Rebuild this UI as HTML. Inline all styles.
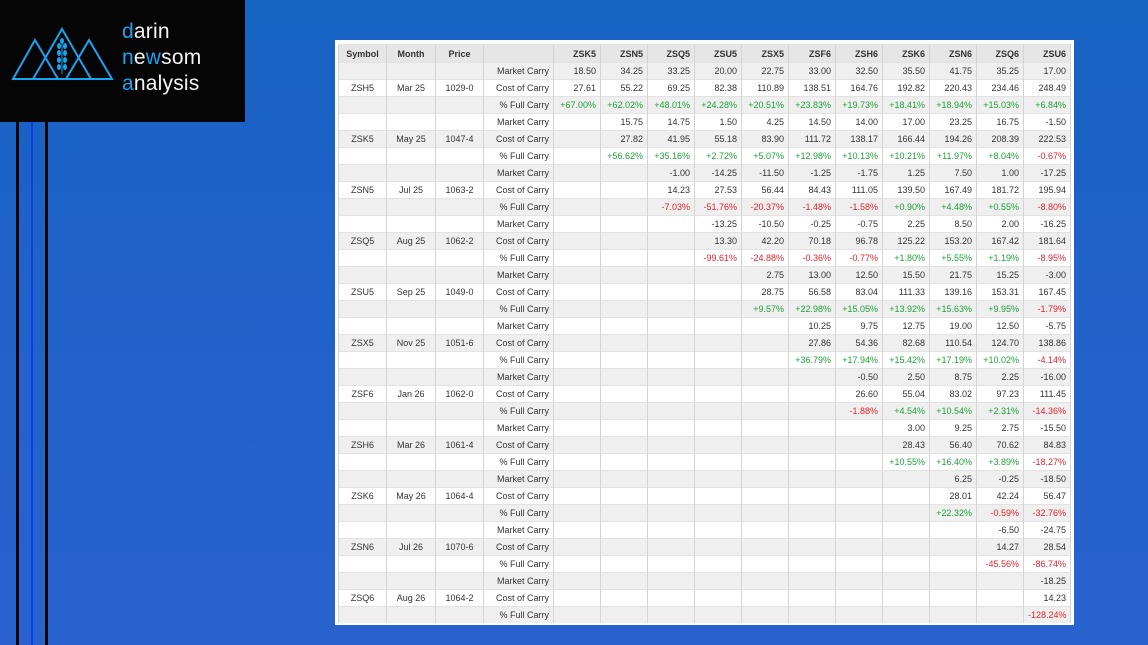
<!DOCTYPE html>
<html><head><meta charset="utf-8"><style>
html,body{margin:0;padding:0;width:1148px;height:645px;overflow:hidden}
body{background:linear-gradient(180deg,#1663c2 0%,#1f62c8 40%,#2962cf 100%);position:relative;font-family:"Liberation Sans",sans-serif}
.logo{position:absolute;left:0;top:0;width:245px;height:122px;background:#050505}
.logo .t{position:absolute;left:122px;top:19px;color:#f4f4f4;font-size:21px;line-height:26px;letter-spacing:0.2px}
.logo .t b{color:#1aa3f0;font-weight:normal}
.vl{position:absolute;top:122px;height:523px;width:3px;background:#050505}
.panel{position:absolute;left:335px;top:40px;width:739px;height:585px;background:#fff}
table{position:absolute;left:3px;top:4px;border-collapse:collapse;table-layout:fixed;width:733px;height:579px;font-size:9px;color:#333}
td,th{border-left:1px solid #d4d4d4;border-right:1px solid #d4d4d4;border-top:1px solid #e2e2e2;padding:0 4px;text-align:right;white-space:nowrap;overflow:hidden}
th{height:17px;background:#e6e6e6;font-weight:bold;text-align:right}
th.c,td.c{text-align:center}
tr:nth-child(even) td{background:#efefef}
.g{color:#1fa23a}.r{color:#e3242b}
</style></head><body>
<div class="logo">
<svg width="120" height="90" style="position:absolute;left:8px;top:22px" viewBox="0 0 120 90">
<g fill="none" stroke="#1aa3f0" stroke-width="2">
<polygon points="5,57 27,18 50,57"/><polygon points="25,57 54,7 83,57"/><polygon points="58,57 81,18 104,57"/>
</g>
<g fill="#1aa3f0"><line x1="54" y1="22" x2="54" y2="52" stroke="#1aa3f0" stroke-width="1"/>
<ellipse cx="51" cy="24" rx="2" ry="3"/><ellipse cx="57" cy="24" rx="2" ry="3"/><ellipse cx="51" cy="31" rx="2" ry="3"/><ellipse cx="57" cy="31" rx="2" ry="3"/><ellipse cx="51" cy="38" rx="2" ry="3"/><ellipse cx="57" cy="38" rx="2" ry="3"/><ellipse cx="51" cy="45" rx="2" ry="3"/><ellipse cx="57" cy="45" rx="2" ry="3"/><ellipse cx="54" cy="19" rx="2" ry="3"/></g>
</svg>
<div class="t"><b>d</b>arin<br><b>n</b>e<b>w</b>som<br><b>a</b>nalysis</div>
</div>
<div class="vl" style="left:16px"></div>
<div class="vl" style="left:31px;width:2px;background:#0a3cf0"></div>
<div class="vl" style="left:45px"></div>
<div class="panel"><table>
<colgroup><col style="width:48px"><col style="width:49px"><col style="width:48px"><col style="width:70px"><col span="11"></colgroup>
<tr><th class="c">Symbol</th><th class="c">Month</th><th class="c">Price</th><th></th><th>ZSK5</th><th>ZSN5</th><th>ZSQ5</th><th>ZSU5</th><th>ZSX5</th><th>ZSF6</th><th>ZSH6</th><th>ZSK6</th><th>ZSN6</th><th>ZSQ6</th><th>ZSU6</th></tr>
<tr><td></td><td></td><td></td><td>Market Carry</td><td>18.50</td><td>34.25</td><td>33.25</td><td>20.00</td><td>22.75</td><td>33.00</td><td>32.50</td><td>35.50</td><td>41.75</td><td>35.25</td><td>17.00</td></tr>
<tr><td class="c">ZSH5</td><td class="c">Mar 25</td><td class="c">1029-0</td><td>Cost of Carry</td><td>27.61</td><td>55.22</td><td>69.25</td><td>82.38</td><td>110.89</td><td>138.51</td><td>164.76</td><td>192.82</td><td>220.43</td><td>234.46</td><td>248.49</td></tr>
<tr><td></td><td></td><td></td><td>% Full Carry</td><td class="g">+67.00%</td><td class="g">+62.02%</td><td class="g">+48.01%</td><td class="g">+24.28%</td><td class="g">+20.51%</td><td class="g">+23.83%</td><td class="g">+19.73%</td><td class="g">+18.41%</td><td class="g">+18.94%</td><td class="g">+15.03%</td><td class="g">+6.84%</td></tr>
<tr><td></td><td></td><td></td><td>Market Carry</td><td></td><td>15.75</td><td>14.75</td><td>1.50</td><td>4.25</td><td>14.50</td><td>14.00</td><td>17.00</td><td>23.25</td><td>16.75</td><td>-1.50</td></tr>
<tr><td class="c">ZSK5</td><td class="c">May 25</td><td class="c">1047-4</td><td>Cost of Carry</td><td></td><td>27.82</td><td>41.95</td><td>55.18</td><td>83.90</td><td>111.72</td><td>138.17</td><td>166.44</td><td>194.26</td><td>208.39</td><td>222.53</td></tr>
<tr><td></td><td></td><td></td><td>% Full Carry</td><td></td><td class="g">+56.62%</td><td class="g">+35.16%</td><td class="g">+2.72%</td><td class="g">+5.07%</td><td class="g">+12.98%</td><td class="g">+10.13%</td><td class="g">+10.21%</td><td class="g">+11.97%</td><td class="g">+8.04%</td><td class="r">-0.67%</td></tr>
<tr><td></td><td></td><td></td><td>Market Carry</td><td></td><td></td><td>-1.00</td><td>-14.25</td><td>-11.50</td><td>-1.25</td><td>-1.75</td><td>1.25</td><td>7.50</td><td>1.00</td><td>-17.25</td></tr>
<tr><td class="c">ZSN5</td><td class="c">Jul 25</td><td class="c">1063-2</td><td>Cost of Carry</td><td></td><td></td><td>14.23</td><td>27.53</td><td>56.44</td><td>84.43</td><td>111.05</td><td>139.50</td><td>167.49</td><td>181.72</td><td>195.94</td></tr>
<tr><td></td><td></td><td></td><td>% Full Carry</td><td></td><td></td><td class="r">-7.03%</td><td class="r">-51.76%</td><td class="r">-20.37%</td><td class="r">-1.48%</td><td class="r">-1.58%</td><td class="g">+0.90%</td><td class="g">+4.48%</td><td class="g">+0.55%</td><td class="r">-8.80%</td></tr>
<tr><td></td><td></td><td></td><td>Market Carry</td><td></td><td></td><td></td><td>-13.25</td><td>-10.50</td><td>-0.25</td><td>-0.75</td><td>2.25</td><td>8.50</td><td>2.00</td><td>-16.25</td></tr>
<tr><td class="c">ZSQ5</td><td class="c">Aug 25</td><td class="c">1062-2</td><td>Cost of Carry</td><td></td><td></td><td></td><td>13.30</td><td>42.20</td><td>70.18</td><td>96.78</td><td>125.22</td><td>153.20</td><td>167.42</td><td>181.64</td></tr>
<tr><td></td><td></td><td></td><td>% Full Carry</td><td></td><td></td><td></td><td class="r">-99.61%</td><td class="r">-24.88%</td><td class="r">-0.36%</td><td class="r">-0.77%</td><td class="g">+1.80%</td><td class="g">+5.55%</td><td class="g">+1.19%</td><td class="r">-8.95%</td></tr>
<tr><td></td><td></td><td></td><td>Market Carry</td><td></td><td></td><td></td><td></td><td>2.75</td><td>13.00</td><td>12.50</td><td>15.50</td><td>21.75</td><td>15.25</td><td>-3.00</td></tr>
<tr><td class="c">ZSU5</td><td class="c">Sep 25</td><td class="c">1049-0</td><td>Cost of Carry</td><td></td><td></td><td></td><td></td><td>28.75</td><td>56.58</td><td>83.04</td><td>111.33</td><td>139.16</td><td>153.31</td><td>167.45</td></tr>
<tr><td></td><td></td><td></td><td>% Full Carry</td><td></td><td></td><td></td><td></td><td class="g">+9.57%</td><td class="g">+22.98%</td><td class="g">+15.05%</td><td class="g">+13.92%</td><td class="g">+15.63%</td><td class="g">+9.95%</td><td class="r">-1.79%</td></tr>
<tr><td></td><td></td><td></td><td>Market Carry</td><td></td><td></td><td></td><td></td><td></td><td>10.25</td><td>9.75</td><td>12.75</td><td>19.00</td><td>12.50</td><td>-5.75</td></tr>
<tr><td class="c">ZSX5</td><td class="c">Nov 25</td><td class="c">1051-6</td><td>Cost of Carry</td><td></td><td></td><td></td><td></td><td></td><td>27.86</td><td>54.36</td><td>82.68</td><td>110.54</td><td>124.70</td><td>138.86</td></tr>
<tr><td></td><td></td><td></td><td>% Full Carry</td><td></td><td></td><td></td><td></td><td></td><td class="g">+36.79%</td><td class="g">+17.94%</td><td class="g">+15.42%</td><td class="g">+17.19%</td><td class="g">+10.02%</td><td class="r">-4.14%</td></tr>
<tr><td></td><td></td><td></td><td>Market Carry</td><td></td><td></td><td></td><td></td><td></td><td></td><td>-0.50</td><td>2.50</td><td>8.75</td><td>2.25</td><td>-16.00</td></tr>
<tr><td class="c">ZSF6</td><td class="c">Jan 26</td><td class="c">1062-0</td><td>Cost of Carry</td><td></td><td></td><td></td><td></td><td></td><td></td><td>26.60</td><td>55.04</td><td>83.02</td><td>97.23</td><td>111.45</td></tr>
<tr><td></td><td></td><td></td><td>% Full Carry</td><td></td><td></td><td></td><td></td><td></td><td></td><td class="r">-1.88%</td><td class="g">+4.54%</td><td class="g">+10.54%</td><td class="g">+2.31%</td><td class="r">-14.36%</td></tr>
<tr><td></td><td></td><td></td><td>Market Carry</td><td></td><td></td><td></td><td></td><td></td><td></td><td></td><td>3.00</td><td>9.25</td><td>2.75</td><td>-15.50</td></tr>
<tr><td class="c">ZSH6</td><td class="c">Mar 26</td><td class="c">1061-4</td><td>Cost of Carry</td><td></td><td></td><td></td><td></td><td></td><td></td><td></td><td>28.43</td><td>56.40</td><td>70.62</td><td>84.83</td></tr>
<tr><td></td><td></td><td></td><td>% Full Carry</td><td></td><td></td><td></td><td></td><td></td><td></td><td></td><td class="g">+10.55%</td><td class="g">+16.40%</td><td class="g">+3.89%</td><td class="r">-18.27%</td></tr>
<tr><td></td><td></td><td></td><td>Market Carry</td><td></td><td></td><td></td><td></td><td></td><td></td><td></td><td></td><td>6.25</td><td>-0.25</td><td>-18.50</td></tr>
<tr><td class="c">ZSK6</td><td class="c">May 26</td><td class="c">1064-4</td><td>Cost of Carry</td><td></td><td></td><td></td><td></td><td></td><td></td><td></td><td></td><td>28.01</td><td>42.24</td><td>56.47</td></tr>
<tr><td></td><td></td><td></td><td>% Full Carry</td><td></td><td></td><td></td><td></td><td></td><td></td><td></td><td></td><td class="g">+22.32%</td><td class="r">-0.59%</td><td class="r">-32.76%</td></tr>
<tr><td></td><td></td><td></td><td>Market Carry</td><td></td><td></td><td></td><td></td><td></td><td></td><td></td><td></td><td></td><td>-6.50</td><td>-24.75</td></tr>
<tr><td class="c">ZSN6</td><td class="c">Jul 26</td><td class="c">1070-6</td><td>Cost of Carry</td><td></td><td></td><td></td><td></td><td></td><td></td><td></td><td></td><td></td><td>14.27</td><td>28.54</td></tr>
<tr><td></td><td></td><td></td><td>% Full Carry</td><td></td><td></td><td></td><td></td><td></td><td></td><td></td><td></td><td></td><td class="r">-45.56%</td><td class="r">-86.74%</td></tr>
<tr><td></td><td></td><td></td><td>Market Carry</td><td></td><td></td><td></td><td></td><td></td><td></td><td></td><td></td><td></td><td></td><td>-18.25</td></tr>
<tr><td class="c">ZSQ6</td><td class="c">Aug 26</td><td class="c">1064-2</td><td>Cost of Carry</td><td></td><td></td><td></td><td></td><td></td><td></td><td></td><td></td><td></td><td></td><td>14.23</td></tr>
<tr><td></td><td></td><td></td><td>% Full Carry</td><td></td><td></td><td></td><td></td><td></td><td></td><td></td><td></td><td></td><td></td><td class="r">-128.24%</td></tr>
</table></div>
</body></html>
